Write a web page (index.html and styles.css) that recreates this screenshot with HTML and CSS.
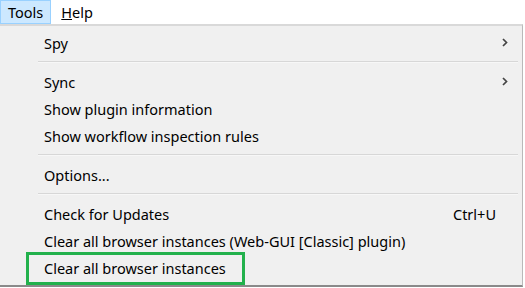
FILE: index.html
```html
<!DOCTYPE html>
<html lang="en">
<head>
  <meta charset="UTF-8">
  <title>Tools menu</title>
  <link rel="stylesheet" href="styles.css">
</head>
<body>
  <div class="menubar">
    <div class="menubar-item active">Tools</div>
    <div class="menubar-item"><u>H</u>elp</div>
  </div>
  <div class="dropdown">
    <div class="item">
      <span>Spy</span>
      <svg class="arrow" width="6" height="9" viewBox="0 0 6 9"><path d="M1 1 L4.5 4.5 L1 8" fill="none" stroke="#444" stroke-width="1.7"/></svg>
    </div>
    <div class="separator"></div>
    <div class="item">
      <span>Sync</span>
      <svg class="arrow" width="6" height="9" viewBox="0 0 6 9"><path d="M1 1 L4.5 4.5 L1 8" fill="none" stroke="#444" stroke-width="1.7"/></svg>
    </div>
    <div class="item"><span>Show plugin information</span></div>
    <div class="item"><span>Show workflow inspection rules</span></div>
    <div class="separator"></div>
    <div class="item"><span>Options...</span></div>
    <div class="separator"></div>
    <div class="item">
      <span>Check for Updates</span>
      <span class="shortcut">Ctrl+U</span>
    </div>
    <div class="item"><span>Clear all browser instances (Web-GUI [Classic] plugin)</span></div>
    <div class="item highlighted"><span>Clear all browser instances</span></div>
  </div>
</body>
</html>
```

FILE: styles.css
```css
body {
  margin: 0;
  font-family: 'Noto Sans', 'Open Sans', sans-serif;
  font-size: 14.5px;
  color: #000;
  background-color: #ffffff;
  width: 525px;
  height: 288px;
  overflow: hidden;
}
.menubar {
  display: flex;
  height: 24px;
  background: #fff;
}
.menubar-item {
  padding: 0 7px;
  line-height: 22px;
  border: 1px solid transparent;
  margin-right: 2px;
}
.menubar-item.active {
  background-color: #cce8ff;
  border-color: #99d1ff;
}
.dropdown {
  width: 523px;
  height: 263px;
  background-color: #f0f0f0;
  border-top: 2px solid #d9d9d9;
  border-right: 1px solid #b9b9b9;
  border-bottom: 2px solid #8a8a8a;
  padding-top: 3px;
  box-sizing: border-box;
}
.item {
  height: 27px;
  display: flex;
  align-items: center;
  justify-content: space-between;
  padding: 0 14px 0 44px;
  position: relative;
}
.arrow {
  display: block;
}
.shortcut {
  margin-right: 12px;
}
.separator {
  height: 1px;
  margin: 5px 4px 5px 38px;
  background-color: #d7d7d7;
  border-bottom: 1px solid #f7f7f7;
}
.highlighted::after {
  content: "";
  position: absolute;
  left: 26px;
  top: -2px;
  width: 213px;
  height: 27px;
  border: 3px solid #22b14c;
}
```
